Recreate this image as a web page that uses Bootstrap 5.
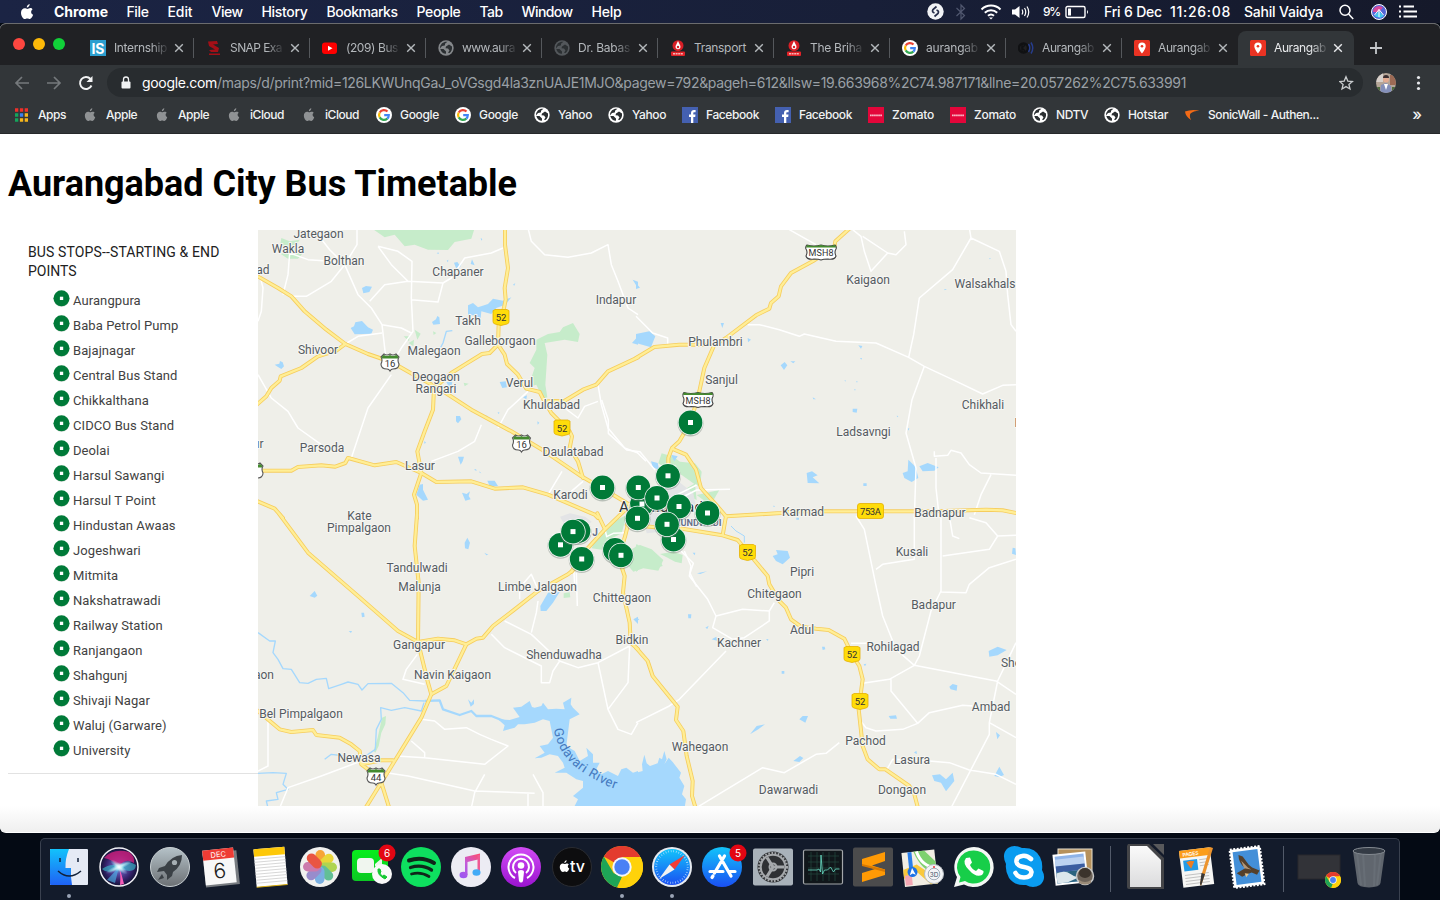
<!DOCTYPE html>
<html lang="en">
<head>
<meta charset="utf-8">
<title>Aurangabad City Bus Timetable</title>
<link href="https://cdn.jsdelivr.net/npm/bootstrap@5.3.0/dist/css/bootstrap.min.css" rel="stylesheet">
<script src="https://cdn.jsdelivr.net/npm/bootstrap@5.3.0/dist/js/bootstrap.bundle.min.js"></script>
<style>
body{width:1440px;height:900px;overflow:hidden;background:#040a14;font-family:Inter,"Liberation Sans",sans-serif}
svg{display:block;flex:none}
.fit{white-space:nowrap;display:block;flex:none}
.menubar{height:23px;background:linear-gradient(90deg,#1b2444,#181f38 60%,#15192a);color:#fff;font-size:14px;font-weight:500;padding-left:20px;line-height:22px}
.window{height:810px;border-radius:6px;overflow:hidden;background:#fff;border-top:1px solid #6b6c6e}
.tabstrip{height:41px;background:#202124;padding:7px 0 0 13px}
.light{width:12px;height:12px;border-radius:50%;margin-right:8px;margin-top:-9px}
.btab{width:116px;height:34px;padding-left:12px;position:relative;color:#b4b8bc;font-size:12px}
.btab .ttl{width:53px;height:18px;line-height:18px;margin-left:8px;white-space:nowrap}
.btab .ttl span{display:inline-block;-webkit-mask-image:linear-gradient(90deg,#000 70%,rgba(0,0,0,.15))}
.btab .ttl span.full{-webkit-mask-image:none}
.btab .cl{margin-left:7px}
.btab:not(.on)::after{content:"";position:absolute;right:0;top:7px;width:1px;height:20px;background:#55585c}
.btab.noline::after{display:none}
.btab.on{background:#323639;border-radius:8px 8px 0 0;color:#e8eaec}
.btab.on .cl{margin-left:6px}
.toolbar{height:36px;background:#323639;padding:0 0 1px 14px}
.omni{height:29px;width:1256px;margin-left:13px;border-radius:15px;background:#282c2f;color:#9aa0a6;font-size:14px;padding-left:14px}
.omni b{color:#fff;font-weight:400}
.bookmarks{height:33px;background:#323639;color:#f1f3f4;font-size:12px;font-weight:500;border-bottom:1px solid #26292b}
.bm{height:28px}
.doc{height:698px;font-family:Roboto,sans-serif;padding-left:8px;background:linear-gradient(#fff 0,#fff 672px,#efefef 698px)}
.doc h1{font-size:36px;font-weight:700;color:#000;line-height:44px;margin:0;padding-top:28px;height:96px}
.side{width:250px;height:544px;border-bottom:1px solid #e2e2e2;padding:13px 20px 0}
.side h2{font-size:14px;line-height:19px;color:#212121;font-weight:400;margin:0 0 7px}
.side h2 span{display:block}
.side li{height:25px;font-size:13px;letter-spacing:.08px;line-height:25px;color:#424242;padding-left:25px;display:flex}
.side li svg{margin:2px 3px 0 0}
.dock{height:62px;width:1360px;margin:5px 0 0 40px;background:#131b2b;border:1px solid #3a414f;border-bottom:0;border-radius:5px 5px 0 0;padding-left:3px}
.app{width:50.25px;height:61px;padding-top:8px;position:relative;display:flex;justify-content:center}
.app svg{overflow:visible}
.app.run::after{content:"";position:absolute;top:55px;left:23px;width:4px;height:4px;border-radius:50%;background:#9aa3b5}
.sep{width:22px;display:flex;justify-content:center}
.sep i{width:1px;height:46px;margin-top:7px;background:#525a69}
.lb{font:12px Roboto,sans-serif;fill:#555b61;text-anchor:middle;paint-order:stroke;stroke:#f6f6f3;stroke-width:2px;stroke-linejoin:round}
.hw{font:9.5px Roboto,sans-serif;fill:#333;text-anchor:middle}
</style>
</head>
<body>
<svg width="0" height="0" style="position:absolute">
<defs>
<symbol id="x" viewBox="0 0 10 10"><path d="M1.200 1.200l7.600 7.600M8.800 1.200L1.200 8.800" stroke="currentColor" stroke-width="1.400"/></symbol>
<symbol id="globe" viewBox="0 0 16 16"><circle cx="8" cy="8" r="7.700" fill="currentColor"/><path d="M9.500 1.800L7.200 3.600 6.800 5.500 4 6 2 8.500 2.200 6 4 3.200 7 1.700zM2.300 9H5.500L8 11.500V13.800Q3.500 13.500 2.300 9zM11 4.500L14 6.500Q14.500 10.500 11.500 13L10 12.800 11.500 10.500 10 8.500 7.500 8.300 8 6.500z" fill="#2b2f32"/></symbol>
<symbol id="goog" viewBox="0 0 16 16"><circle cx="8" cy="8" r="8" fill="#fff"/><g fill="none" stroke-width="2.200"><path d="M11.500 4.500A4.900 4.900 0 0 0 3.700 5.600" stroke="#ea4335"/><path d="M3.700 5.600a4.900 4.900 0 0 0 0 4.800" stroke="#fbbc05"/><path d="M3.700 10.400a4.900 4.900 0 0 0 7.600 1.200" stroke="#34a853"/><path d="M11.300 11.600A4.900 4.900 0 0 0 12.800 8.200H8.200" stroke="#4285f4"/></g></symbol>
<symbol id="apple" viewBox="0 0 14 16"><path d="M9.700 0c.1 1.700-1.200 3.400-2.900 3.500C6.600 1.800 8.200.2 9.700 0zM12.500 5.500c-2 1.200-1.700 4.200.6 5.200-.6 1.800-1.900 4.200-3.300 4.300-1 0-1.300-.6-2.500-.6s-1.600.6-2.500.6C2.900 15 1 11.700 1 8.700 1 5.700 2.900 4.200 4.700 4.200c1.100 0 1.900.7 2.700.7.700 0 1.700-.8 3-.8.900 0 1.700.5 2.100 1.400z" fill="currentColor"/></symbol>
<symbol id="fb" viewBox="0 0 16 16"><rect width="16" height="16" fill="#4460b0"/><path d="M9 16V10H7V7.600h2V6c0-2 1.200-3 3-3h1.600v2.300h-1.300c-.9 0-1 .5-1 1.100v1.200h2.200L13.200 10h-1.900v6z" fill="#fff"/></symbol>
<symbol id="zom" viewBox="0 0 16 16"><rect width="16" height="16" fill="#e3063a"/><path d="M2 8.300h12" stroke="#f8bcc8" stroke-width="1.700" stroke-dasharray="1.700 .35"/></symbol>
<symbol id="pinfav" viewBox="0 0 16 16"><rect width="16" height="16" rx="1.500" fill="#ea3323"/><path d="M8 2.500a3.700 3.700 0 0 0-3.700 3.700C4.300 9 8 13.500 8 13.500S11.700 9 11.700 6.200A3.700 3.700 0 0 0 8 2.500z" fill="#fff"/><circle cx="8" cy="6.200" r="1.300" fill="#ea3323"/></symbol>
<symbol id="redlogo" viewBox="0 0 16 16"><circle cx="8" cy="5.700" r="5.500" fill="#d81f26"/><path d="M8 1l2.300 4.800a2.500 2.500 0 1 1-4.600 0z" fill="#fff"/><circle cx="8" cy="7" r="1.200" fill="#d81f26"/><rect x="1" y="11.500" width="14" height="4.500" rx="1" fill="#e32228"/><path d="M3 13.800h10" stroke="#f6b6b6" stroke-width="1.600" stroke-dasharray="2 .6"/></symbol>
<symbol id="stop" viewBox="0 0 18 18"><circle cx="9" cy="9.600" r="8.300" fill="#d2d8d5"/><circle cx="9" cy="8.800" r="8.500" fill="#007a38"/><rect x="7.300" y="7.100" width="3.500" height="3.500" fill="#fff"/></symbol>
<symbol id="chromeic" viewBox="0 0 42 42"><circle cx="21" cy="21" r="21" fill="#fbc712"/><path d="M21 21L2.800 10.500A21 21 0 0 1 39.200 10.500z" fill="#e33b2e"/><path d="M2.800 10.500L12.500 27 21 31l-5 10.300A21 21 0 0 1 2.800 10.500z" fill="#1ea557"/><path d="M21 31l8.500-5.500L23 42H17z" fill="#fdd008"/><path d="M21 11H39.500A21 21 0 0 1 22 42L30 25z" fill="#ffd20a"/><circle cx="21" cy="21" r="9.700" fill="#f4f6fa"/><circle cx="21" cy="21" r="7.700" fill="#4a80f5"/></symbol>
<linearGradient id="gF" x2="0" y2="1"><stop stop-color="#12c2fb"/><stop offset="1" stop-color="#1f62f5"/></linearGradient>
<linearGradient id="gG" x2="0" y2="1"><stop stop-color="#b5c2c8"/><stop offset="1" stop-color="#6c7074"/></linearGradient>
<linearGradient id="gGr" x2="0" y2="1"><stop stop-color="#07ee1c"/><stop offset="1" stop-color="#0cc824"/></linearGradient>
<linearGradient id="gP" x2="0" y2="1"><stop stop-color="#d24bf5"/><stop offset="1" stop-color="#9a14cf"/></linearGradient>
<linearGradient id="gB" x2="0" y2="1"><stop stop-color="#12c4fb"/><stop offset="1" stop-color="#1a4ff2"/></linearGradient>
<linearGradient id="gN" gradientUnits="userSpaceOnUse" x1="10" y1="30" x2="28" y2="8"><stop stop-color="#9a56f2"/><stop offset=".5" stop-color="#c45bd8"/><stop offset="1" stop-color="#fb4d74"/></linearGradient>
<radialGradient id="gS"><stop stop-color="#6fd0ea"/><stop offset=".35" stop-color="#5a4fa8"/><stop offset=".7" stop-color="#35226a"/><stop offset="1" stop-color="#121335"/></radialGradient>
<radialGradient id="gW"><stop stop-color="#fff"/><stop offset="1" stop-color="#9fe8f5" stop-opacity="0"/></radialGradient>
<linearGradient id="gL" x2="0" y2="1"><stop stop-color="#fafafa"/><stop offset="1" stop-color="#dcdcdd"/></linearGradient>
</defs>
</svg>

<div class="menubar d-flex align-items-center">
<svg width="14" height="16" color="#fff"><use href="#apple"/></svg>
<span class="fit" data-w="54" style="margin-left:20px;font-weight:700">Chrome</span>
<div class="d-flex" style="gap:19px;margin-left:18.500px">
<span class="fit" data-w="22">File</span><span class="fit" data-w="25">Edit</span><span class="fit" data-w="31">View</span><span class="fit" data-w="46">History</span><span class="fit" data-w="71">Bookmarks</span><span class="fit" data-w="44">People</span><span class="fit" data-w="23">Tab</span><span class="fit" data-w="51">Window</span><span class="fit" data-w="30">Help</span></div>
<div class="d-flex align-items-center ms-auto" style="padding-right:23px">
<svg style="margin-right:-4px" width="17" height="17" viewBox="0 0 17 17"><circle cx="8.500" cy="8.500" r="8.200" fill="#f1f3f6"/><path d="M9.500 3.500L6 6.500Q4.500 9 7.500 10M7.500 13.500L11 10.500Q12.500 8 9.500 7" fill="none" stroke="#252c48" stroke-width="1.700"/></svg>
<svg style="margin-left:14px" width="14" height="18" viewBox="0 0 14 18"><path d="M2.500 5l8 7.500L7 16V2l3.500 3.500-8 7.500" fill="none" stroke="#515870" stroke-width="1.200"/></svg>
<svg style="margin-left:12px" width="22" height="16" viewBox="0 0 22 16" fill="none" stroke="#fff" stroke-width="2"><path d="M1.500 5.500a13.500 13.500 0 0 1 19 0M4.800 8.700a9 9 0 0 1 12.400 0M8 11.800a4.500 4.500 0 0 1 6 0"/><path d="M11 15.500l2-2h-4z" fill="#fff" stroke="none"/></svg>
<svg style="margin-left:9px" width="19" height="16" viewBox="0 0 19 16"><path d="M1 5.500h3L8.500 2v12L4 10.500H1z" fill="#fff"/><path d="M11 5.500q1.500 2.500 0 5M13.500 4q2.500 4 0 8M16 2.500q3.500 5.500 0 11" stroke="#fff" fill="none" stroke-width="1.200"/></svg>
<span class="fit" data-w="17" style="margin-left:13px;font-size:12px">9%</span>
<svg style="margin-left:5px" width="24" height="14" viewBox="0 0 24 14"><rect x="1" y="1.500" width="19" height="11" rx="1.500" fill="none" stroke="#fff" stroke-width="1.400"/><rect x="3" y="3.500" width="3" height="7" fill="#fff"/><path d="M22 5q2 2 0 4z" fill="#fff"/></svg>
<span class="fit" data-w="58" style="margin-left:15px">Fri 6 Dec</span><span class="fit" data-w="61" style="margin-left:8px">11:26:08</span><span class="fit" data-w="79" style="margin-left:13px">Sahil Vaidya</span>
<svg style="margin-left:16px" width="15" height="16" viewBox="0 0 15 16" fill="none" stroke="#fff" stroke-width="1.500"><circle cx="6" cy="6.200" r="5"/><path d="M9.600 10l4.600 5"/></svg>
<svg style="margin-left:17px" width="16" height="16" viewBox="0 0 16 16"><circle cx="8" cy="8" r="7.500" fill="#5467d8" stroke="#fff"/><path d="M2 8a6 6 0 0 1 10-4.500L8 8z" fill="#d84a9d"/><path d="M3 12l5-5 5 5-4 2z" fill="#42c8ee"/><path d="M3.500 11L8 5.500 12.500 11M8 5.500V13" stroke="#fff" fill="none"/></svg>
<svg style="margin-left:12px" width="18" height="13" viewBox="0 0 18 13"><path d="M0 1.500h2M4.500 1.500H15M0 6.500h2M4.500 6.500H18M0 11.500h2M4.500 11.500H18" stroke="#fff" stroke-width="2"/></svg>
</div>
</div>

<div class="window">
<div class="tabstrip d-flex align-items-center">
<i class="light" style="background:#fe4740"></i><i class="light" style="background:#fdb908"></i><i class="light" style="background:#11d139;margin-right:13px"></i>
<div class="btab d-flex align-items-center"><svg width="16" height="16" viewBox="0 0 16 16"><rect width="16" height="16" fill="#2c9fd0"/><text x="8" y="13.500" font-size="14" font-weight="700" fill="#fff" text-anchor="middle" textLength="13">IS</text></svg><div class="ttl"><span data-w="53">Internship</span></div><svg class="cl" width="10" height="10"><use href="#x"/></svg></div>
<div class="btab d-flex align-items-center"><svg width="16" height="16" viewBox="0 0 16 16"><path d="M2 1.500l9-.5 1 3-5 .5 6 3.500-1 4H5l-2-2 6-.5L3 6zM3 13.500h11v1.500H3z" fill="#a30f17"/></svg><div class="ttl"><span data-w="52">SNAP Exa</span></div><svg class="cl" width="10" height="10"><use href="#x"/></svg></div>
<div class="btab d-flex align-items-center"><svg width="16" height="16" viewBox="0 0 16 16"><rect x="0" y="2.500" width="15" height="11.500" rx="3" fill="#fe0000"/><path d="M6 5.700v5l4.500-2.500z" fill="#fff"/></svg><div class="ttl"><span data-w="52">(209) Bus</span></div><svg class="cl" width="10" height="10"><use href="#x"/></svg></div>
<div class="btab d-flex align-items-center"><svg width="16" height="16" color="#85888b"><use href="#globe"/></svg><div class="ttl"><span data-w="53">www.aura</span></div><svg class="cl" width="10" height="10"><use href="#x"/></svg></div>
<div class="btab d-flex align-items-center"><svg width="16" height="16" color="#53575b"><use href="#globe"/></svg><div class="ttl"><span data-w="52">Dr. Babas</span></div><svg class="cl" width="10" height="10"><use href="#x"/></svg></div>
<div class="btab d-flex align-items-center"><svg width="16" height="16"><use href="#redlogo"/></svg><div class="ttl"><span class="full" data-w="52">Transport</span></div><svg class="cl" width="10" height="10"><use href="#x"/></svg></div>
<div class="btab d-flex align-items-center"><svg width="16" height="16"><use href="#redlogo"/></svg><div class="ttl"><span data-w="52">The Briha</span></div><svg class="cl" width="10" height="10"><use href="#x"/></svg></div>
<div class="btab d-flex align-items-center"><svg width="16" height="16"><use href="#goog"/></svg><div class="ttl"><span data-w="52">aurangab</span></div><svg class="cl" width="10" height="10"><use href="#x"/></svg></div>
<div class="btab d-flex align-items-center"><svg width="16" height="16" viewBox="0 0 16 16" fill="none"><circle cx="5.500" cy="8" r="4.500" stroke="#101113" stroke-width="2.500"/><path d="M4 4v8M7 5L4 8l3 3" stroke="#101113" stroke-width="1.500"/><path d="M10.500 4q2.500 4 0 8M13 2.500q3.500 5.500 0 11" stroke="#263d8d" stroke-width="1.500"/></svg><div class="ttl"><span data-w="52">Aurangab</span></div><svg class="cl" width="10" height="10"><use href="#x"/></svg></div>
<div class="btab noline d-flex align-items-center"><svg width="16" height="16"><use href="#pinfav"/></svg><div class="ttl"><span data-w="52">Aurangab</span></div><svg class="cl" width="10" height="10"><use href="#x"/></svg></div>
<div class="btab on d-flex align-items-center"><svg width="16" height="16"><use href="#pinfav"/></svg><div class="ttl"><span data-w="52">Aurangab</span></div><svg class="cl" width="10" height="10"><use href="#x"/></svg></div>
<svg style="margin-left:15px" width="14" height="14"><path d="M7 1v12M1 7h12" stroke="#c6c9cc" stroke-width="1.800"/></svg>
</div>

<div class="toolbar d-flex align-items-center">
<svg width="16" height="14" viewBox="0 0 16 14" fill="none" stroke="#75797c" stroke-width="1.700"><path d="M15 7H2M8 1L2 7l6 6"/></svg>
<svg style="margin-left:16px" width="16" height="14" viewBox="0 0 16 14" fill="none" stroke="#75797c" stroke-width="1.700"><path d="M1 7h13M8 1l6 6-6 6"/></svg>
<svg style="margin-left:16px" width="16" height="16" viewBox="0 0 16 16"><path d="M13.500 10.500A6 6 0 1 1 12.500 4" fill="none" stroke="#f3f4f5" stroke-width="1.900"/><path d="M14.500 1v6h-6z" fill="#f3f4f5"/></svg>
<div class="omni d-flex align-items-center">
<svg width="10" height="14" viewBox="0 0 10 14"><rect x=".5" y="5.500" width="9" height="7" rx="1" fill="#f1f3f4"/><path d="M2.500 6V3.500a2.500 2.500 0 0 1 5 0V6" fill="none" stroke="#f1f3f4" stroke-width="1.300"/></svg>
<span class="fit" data-w="1044" style="margin-left:11px"><b>google.com</b>/maps/d/print?mid=126LKWUnqGaJ_oVGsgd4la3znUAJE1MJO&amp;pagew=792&amp;pageh=612&amp;llsw=19.663968%2C74.987171&amp;llne=20.057262%2C75.633991</span>
<svg class="ms-auto me-2" width="16" height="16" viewBox="0 0 16 16"><path d="M7 1.800l1.800 4.300 4.600.4-3.500 3 1.100 4.500L7 11.600 3 14l1.100-4.500-3.500-3 4.600-.4z" fill="none" stroke="#c9ccce" stroke-width="1.300"/></svg>
</div>
<svg style="margin-left:13px" width="20" height="20" viewBox="0 0 20 20"><clipPath id="av"><circle cx="10" cy="10" r="10"/></clipPath><g clip-path="url(#av)"><rect width="20" height="20" fill="#b5a597"/><path d="M0 0h7v9H0z" fill="#d7d0cb"/><path d="M14 2h6v10h-6z" fill="#9c6a55"/><path d="M4 20l1-8 5-2 5 3 1 7z" fill="#8490ba"/><path d="M8 11l2 6 2-6z" fill="#fff"/><circle cx="10" cy="6.500" r="3" fill="#e4ac92"/><path d="M7 5a3 3 0 0 1 6 0z" fill="#3b2e30"/><path d="M0 14h4v6H0zM16 14h4v6h-4z" fill="#4d6a3c"/></g></svg>
<svg style="margin-left:20px" width="5" height="16" fill="#e8eaed"><circle cx="2.500" cy="2.500" r="1.600"/><circle cx="2.500" cy="8" r="1.600"/><circle cx="2.500" cy="13.500" r="1.600"/></svg>
</div>

<div class="bookmarks">
<div class="d-flex align-items-center bm" style="padding-left:15px">
<svg width="13" height="14" viewBox="0 0 13 14"><path d="M0 2h3.300M4.900 2h3.300M9.700 2H13" stroke="#f0302a" stroke-width="3.300"/><path d="M0 7h3.300" stroke="#14a55c" stroke-width="3.300"/><path d="M4.900 7h3.300" stroke="#3b80f0" stroke-width="3.300"/><path d="M9.700 7H13M4.900 12h3.300M9.700 12H13" stroke="#f8b71b" stroke-width="3.300"/><path d="M0 12h3.300" stroke="#14a55c" stroke-width="3.300"/></svg>
<span class="fit" data-w="28" style="margin:0 18px 0 10px">Apps</span>
<svg width="12" height="14" color="#8f9294"><use href="#apple"/></svg><span class="fit" data-w="31" style="margin:0 19px 0 10px">Apple</span>
<svg width="12" height="14" color="#8f9294"><use href="#apple"/></svg><span class="fit" data-w="31" style="margin:0 19px 0 10px">Apple</span>
<svg width="12" height="14" color="#8f9294"><use href="#apple"/></svg><span class="fit" data-w="34" style="margin:0 19px 0 10px">iCloud</span>
<svg width="12" height="14" color="#8f9294"><use href="#apple"/></svg><span class="fit" data-w="34" style="margin:0 17px 0 10px">iCloud</span>
<svg width="16" height="16"><use href="#goog"/></svg><span class="fit" data-w="39" style="margin:0 16px 0 8px">Google</span>
<svg width="16" height="16"><use href="#goog"/></svg><span class="fit" data-w="39" style="margin:0 16px 0 8px">Google</span>
<svg width="16" height="16" color="#fff"><use href="#globe"/></svg><span class="fit" data-w="34" style="margin:0 16px 0 8px">Yahoo</span>
<svg width="16" height="16" color="#fff"><use href="#globe"/></svg><span class="fit" data-w="34" style="margin:0 16px 0 8px">Yahoo</span>
<svg width="16" height="16"><use href="#fb"/></svg><span class="fit" data-w="53" style="margin:0 16px 0 8px">Facebook</span>
<svg width="16" height="16"><use href="#fb"/></svg><span class="fit" data-w="53" style="margin:0 16px 0 8px">Facebook</span>
<svg width="16" height="16"><use href="#zom"/></svg><span class="fit" data-w="42" style="margin:0 16px 0 8px">Zomato</span>
<svg width="16" height="16"><use href="#zom"/></svg><span class="fit" data-w="42" style="margin:0 16px 0 8px">Zomato</span>
<svg width="16" height="16" color="#fff"><use href="#globe"/></svg><span class="fit" data-w="32" style="margin:0 16px 0 8px">NDTV</span>
<svg width="16" height="16" color="#fff"><use href="#globe"/></svg><span class="fit" data-w="40" style="margin:0 16px 0 8px">Hotstar</span>
<svg width="16" height="16" viewBox="0 0 16 16"><path d="M1 4.500Q7 2 15.500 3.500 9 4 6.500 6.500 5 9 7 13 1.500 9.500 1 4.500z" fill="#f26a16"/></svg><span class="fit" data-w="111" style="margin:0 0 0 8px">SonicWall - Authen...</span>
<span class="ms-auto" style="padding-right:18px;font-size:16px;margin-top:-3px">»</span>
</div></div>

<div class="doc">
<h1><span class="fit" style="display:inline-block" data-w="509">Aurangabad City Bus Timetable</span></h1>
<div class="d-flex">
<div class="side">
<h2><span class="fit" style="display:inline-block" data-w="191.500">BUS STOPS--STARTING &amp; END</span><span>POINTS</span></h2>
<ul class="list-unstyled m-0">
<li><svg width="17" height="17"><use href="#stop"/></svg>Aurangpura</li>
<li><svg width="17" height="17"><use href="#stop"/></svg>Baba Petrol Pump</li>
<li><svg width="17" height="17"><use href="#stop"/></svg>Bajajnagar</li>
<li><svg width="17" height="17"><use href="#stop"/></svg>Central Bus Stand</li>
<li><svg width="17" height="17"><use href="#stop"/></svg>Chikkalthana</li>
<li><svg width="17" height="17"><use href="#stop"/></svg>CIDCO Bus Stand</li>
<li><svg width="17" height="17"><use href="#stop"/></svg>Deolai</li>
<li><svg width="17" height="17"><use href="#stop"/></svg>Harsul Sawangi</li>
<li><svg width="17" height="17"><use href="#stop"/></svg>Harsul T Point</li>
<li><svg width="17" height="17"><use href="#stop"/></svg>Hindustan Awaas</li>
<li><svg width="17" height="17"><use href="#stop"/></svg>Jogeshwari</li>
<li><svg width="17" height="17"><use href="#stop"/></svg>Mitmita</li>
<li><svg width="17" height="17"><use href="#stop"/></svg>Nakshatrawadi</li>
<li><svg width="17" height="17"><use href="#stop"/></svg>Railway Station</li>
<li><svg width="17" height="17"><use href="#stop"/></svg>Ranjangaon</li>
<li><svg width="17" height="17"><use href="#stop"/></svg>Shahgunj</li>
<li><svg width="17" height="17"><use href="#stop"/></svg>Shivaji Nagar</li>
<li><svg width="17" height="17"><use href="#stop"/></svg>Waluj (Garware)</li>
<li><svg width="17" height="17"><use href="#stop"/></svg>University</li>
</ul>
</div>
<svg width="758" height="576" viewBox="258 230 758 576">
<defs>
<!-- four map sheets plus the city sheet, each drawn at 3x -->
<g id="roads" fill="none" stroke-linejoin="round" stroke-linecap="round">
<g transform="translate(258 228) scale(.33333)">
<path d="M-6 142L60 180 100 205 140 250 205 305 262 348 330 378 400 402 475 445 540 480 640 545 760 610 860 670 970 745 1040 785 1115 830"/>
<path d="M-6 532L25 505 40 480 65 458 68 445 130 420 180 385 235 368 262 348"/>
<path d="M741 0V50L750 120 740 180 743 215 738 240 722 290 720 350 740 380 747 408 780 440 805 482 845 492 858 518 880 555 935 610 942 625 935 660 960 700 975 750"/>
<path d="M720 350L695 375 672 378 620 410 580 435 535 475 528 480 525 545 500 610 478 670 490 735"/>
<path d="M0 728H100L120 717 190 712 232 716 262 705 270 690 350 712 415 702 490 735 535 762 640 760 710 782 795 778 870 800 1010 860 1020 870"/>
<path d="M490 735L468 800 477 830V870M-6 818L50 842 75 870M870 520L920 518 975 485 1015 470 1050 430 1140 388"/>
</g>
<g transform="translate(636 228) scale(.33333)">
<path d="M640 2L598 40 595 58 530 100 465 135 435 175 428 205 405 225 400 242 360 262 270 330 235 352"/>
<path d="M0 390L55 357 130 350H235L205 420 190 490 165 580 130 640 108 660 97 690V730M108 662L150 680 180 725 195 780 240 830 270 865 435 855 480 850H900L1050 845 1100 847 1146 856"/>
</g>
<g transform="translate(636 516) scale(.33333)">
<path d="M125 36L260 58 305 72 395 180 400 205 430 255 450 275 465 310 495 332 540 338 578 342 625 368 648 415 670 450 680 490 668 580 680 690 695 730 730 760H748L820 810 835 835 847 880M260 58L270 0"/>
<path d="M0 395L35 435 50 480 125 572 120 612 142 645 152 720 170 795 168 840 180 880"/>
</g>
<g transform="translate(258 516) scale(.33333)">
<path d="M65 -4L150 110 300 240 420 345 480 378M477 -4L470 90 482 200 480 378 510 500 520 535M480 378L540 368 590 373 625 385 655 368 675 365 705 330 770 280 840 225 930 175 950 158"/>
<path d="M625 385L565 510 520 535 490 605 410 735 320 880M-6 580L65 640 100 648 165 642 175 657 245 665 280 685 305 705 310 745 370 733H405M310 745L330 760 370 800 395 880M1090 150L1100 180 1095 230 1115 320 1118 380 1140 400"/>
</g>
<g transform="translate(530 400) scale(.33333)">
<path d="M202 340L225 388 300 316M225 388L150 470 125 515M290 375L360 380 450 390M295 370L285 410 272 450 280 500"/>
</g>
</g>
<g id="us"><path d="M-9-5Q-7-7-6-8-3-6 0-8 3-6 6-8 7-7 9-5 7-2 9 2 9 7 3 7 1 7 0 9-1 7-3 7-9 7-9 2-7-2-9-5z" fill="#fff" stroke="#555" stroke-width="1.100"/><path d="M-8.300-5Q-7-7-6-7-3-5 0-7 3-5 6-7 7-7 8.300-5L8-3.500H-8z" fill="#448a2f"/></g>
<g id="msh"><path d="M-14-7Q-7-5 0-7 7-5 14-7 16-5 15-3 13 0 15 4 14 8 7 7 2 7 0 8-2 7-7 7-14 8-15 4-13 0-15-3-16-5-14-7z" fill="#fff" stroke="#444" stroke-width="1.100"/><path d="M-14-7Q-7-5 0-7 7-5 14-7L15-4.500H-15z" fill="#448a2f"/><text class="hw" y="4" style="font-size:9px" textLength="25">MSH8</text></g>
<g id="nh"><path d="M-6-8H6Q7-7 8-7V4Q8 6 6 6.500L0 8-6 6.500Q-8 6-8 4V-7Q-7-7-6-8z" fill="#ffdc0a" stroke="#e5b000" stroke-width=".8"/><text class="hw" y="3.500">52</text></g>
<g id="pin"><circle cy="1" r="13" fill="#6c7b70" opacity=".4"/><circle r="12.600" fill="#fff"/><circle r="11.900" fill="#007a38"/><rect x="-2.500" y="-2.500" width="5" height="5" fill="#fff"/></g>
</defs>
<rect x="258" y="230" width="758" height="576" fill="#efefe9"/>
<!-- parks -->
<g fill="#c6ecca">
<path transform="translate(258 228) scale(.33333)" d="M340 0L380 28 410 20 440 55 470 50 510 65 570 66 590 42 640 32 650 0zM70 30L95 40 125 35 110 60 135 75 120 92 90 92 68 78 90 70 65 60zM835 335L870 318 905 312 915 298 945 285 965 318 960 342 920 335 860 345 868 380 862 470 868 508 855 512 835 470 810 478 830 420 815 405 835 365zM470 305l18 12-10 18zM437 325l18 0-2 15zM452 345l16-10-2 20zM525 310l10 5-8 6zM617 464l15 3-12 8z"/>
<path transform="translate(530 400) scale(.33333)" d="M395 160L430 170 450 185 495 190 515 215 510 260 490 250 455 225 420 215 385 190zM470 265L495 250 500 300 480 290zM500 285L568 270 545 310 520 300zM230 375L290 345 275 400 235 420 220 450 185 445 200 410zM300 450L330 435 365 448 400 480 385 512 340 505 310 515 280 480zM390 462L430 455 458 465 455 490 435 485 410 472z"/>
<path transform="translate(258 516) scale(.33333)" d="M917 232l18-3 2 15-20 2zM372 605l12-5-2 25-12 25-8 40-10 20-5-5 12-40zM1140 85L1115 110 1125 155 1140 165z"/>
<path transform="translate(636 516) scale(.33333)" d="M0 85L25 95 65 120 80 150 45 160 25 145 0 168z"/>
</g>
<path transform="translate(530 400) scale(.33333)" d="M90 350L120 340 165 350 185 365 160 385 110 385zM400 250L440 240 490 280 500 330 460 350 440 390 350 400 340 350z" fill="#e3e4e6"/>
<!-- lakes and streams -->
<g fill="#a5d8fd">
<path transform="translate(258 228) scale(.33333)" d="M278 300L288 295 292 283 312 279 330 298 345 305 340 317 290 319zM312 180l12-6 18 2-8 16-18 4zM630 232L645 225 660 238 690 228 705 212 735 218 760 208 742 230 715 240 700 258 670 250 668 270 655 280 648 262 630 262zM522 282l12-8 4-10 6 4 2 20-20 2zM588 104l10-2 6 8 8-6-6 14-12 2zM638 108l4-14 8 18zM50 410l14-3 2-8 8 4 4 12-8 8-10-6zM594 564l12 0 4 10-10 12-6-6zM600 686l18 0-4 14-6 10zM475 800L485 770 495 768 495 785 510 815 495 818zM612 794l14 4 10-8-4 14 6 10-16 4zM688 758l22 0 10 16-24 2zM725 462l18-2 4 18-14 2zM795 508l12-6-2 12zM1124 155l16 6v20zM565 462l18 0-5 24zM1122 345l18-20v25zM536 76l5-3 2 5zM566 98l5-3-1 8zM668 30l5 3-3 5zM765 170l7-5-3 8zM681 562l8 2-5 5zM639 541l6 2-4 4zM719 552l6 2-4 4zM838 580l6 4-5 6zM498 640l6 3-4 5zM648 725l6-2 2 6zM664 730l6 6-5-2z"/>
<path transform="translate(636 228) scale(.33333)" d="M0 318L40 310 58 325 45 358 0 345zM434 412l12-10 8 10-10 14zM463 400l15 0-6 6zM512 735L528 730 545 742 530 748 550 766 515 765zM800 735l15-5 2-35 20 20 5 15 5 20-20 12-22-12zM850 715L875 705 908 718 895 728 860 730zM667 352l12 2-4 8zM650 542l14 0-2 12-12-2zM682 766h10v8h-10zM0 165l12 14-12 4zM254 285l10 0-5 15zM335 330l10 5-9 8zM45 700l20 5 5 22-20-10zM105 680l20 5-10 15zM530 508l10 6-8 0zM672 390l6 0-2 5zM625 457l4 0 0 4zM660 460l5 0-2 4zM654 484l5 0-2 4zM686 489l6 2zM782 563l5 1-3 4zM815 602l5-2-2 8zM1060 90l5 1-4 3zM925 183l8 0-7 4zM411 833l6 1-3 4zM262 475l10 4-6 0z"/>
<path transform="translate(258 516) scale(.33333)" d="M620 80l8-15 8 15-5 20-10-3zM155 240l15-15 8 14-8 6zM310 290l8 0 2 12-8 2zM272 345h10l-3 6zM679 110l12 6-6 2zM847 270L870 230 905 228 885 260 865 285 848 285zM720 610L755 612 785 603 765 575 790 572 815 555 822 573 830 575 850 570 855 560 870 580 895 578 920 580 915 560 940 545 938 565 945 575 965 595 935 610 930 650 925 690 950 705 965 735 990 720 985 695 1005 715 1005 740 1025 740 1015 760 1030 775 1050 765 1080 780 1090 760 1105 755 1125 770 1140 765V880H945L960 850 945 840 975 815 975 795 955 790 925 770 890 770 920 755 915 740 900 720 875 715 850 725 830 727 860 710 845 690 870 685 885 665 880 640 875 615 855 610 830 620 800 625 780 625 770 635 735 645 740 628zM630 550l10 10 8-10 0 14-10 8zM1126 310l14-8v22z"/>
<path transform="translate(636 516) scale(.33333)" d="M0 770L20 765 18 745 25 716 32 742 42 750 65 742 70 725 78 730 85 705 92 730 85 745 98 725 110 738 135 770 130 785 145 810 138 835 150 850 145 880H0zM410 120L425 115 420 102 455 105 462 125 440 145 420 135zM490 610l10-10 16 0-8 20zM342 655l20-25 25-5-20 15zM888 778L912 775 930 790 950 770 955 795 930 826 915 800 895 795zM1058 405L1085 392 1112 402 1085 418 1060 422zM940 512l10-8 14 4-2 16-18-4zM758 600l22-2 3 10-20 0zM472 735l20-15 10 6-12 12zM1080 648l12 10-8 12zM1075 780l15-28 14 25-14 6zM156 295l10 0-1 12-8 0zM227 370l14-8 2 12zM558 392h8l2 8-8 2zM437 465h8v8h-8zM183 172l30-6-20 8zM170 110l8 0-2 8zM1130 95l8 2 2 20-12-4zM0 305l10 5-10 8zM834 710l7-6 2 10zM683 445l8-2-4 8zM208 335l10-6-4 10zM390 370l7-1-1 6zM481 5h8v6h-8z"/>
</g>
<g fill="none" stroke="#a5d8fd" stroke-linejoin="round">
<path transform="translate(258 516) scale(.33333)" stroke-width="4" d="M0 350L35 375 52 375 45 410 60 430 75 458 100 460 125 500 150 502 175 490 205 487 212 518 250 505 270 498 300 505 312 522 330 503 400 502 435 530 455 553 500 555M498 560L490 585 440 575 400 583 368 575 370 610 355 640 352 700 330 715 260 720 220 715 200 730M0 772L45 770 85 772 75 805 90 820 55 830 60 850 25 855 30 876"/>
<path transform="translate(258 516) scale(.33333)" stroke-width="7" d="M500 555L545 553 555 580 605 597 640 585 655 600 700 600 750 620"/>
<path transform="translate(258 228) scale(.33333)" stroke-width="4" d="M583 308L565 310 555 345 547 360"/>
<path transform="translate(636 516) scale(.33333)" stroke-width="3" d="M285 30L300 45 325 60 325 80"/>
</g>
<!-- minor roads -->
<g fill="none" stroke="#fff" stroke-linejoin="round">
<path transform="translate(258 228) scale(.33333)" stroke-width="4.500" d="M297 0V50L260 110 220 160 145 205 100 205M180 20L215 65 260 110 300 200 340 240 372 290 383 385M95 75L90 140 75 200M95 75L150 95 220 100 260 110M360 55L420 70 462 100 460 210 465 310 430 360 415 385M360 55L400 110 450 160 555 165 580 150 620 90 700 75 735 60M450 160L380 170 335 220M460 215L540 222 555 165M262 348L300 325 372 315M372 290L430 300 460 315M400 440L330 540 310 600 280 690M0 440L40 510 90 550 120 600 190 650M520 700L600 670 650 640 670 590M720 600L750 545 810 490M912 730L870 800M975 760L940 790M810 0L820 40 860 80 930 88 1000 75 1050 50 1060 110 1080 160 1110 240 1140 260M1020 470L1030 530 1050 600 1075 630 1100 660 1140 675M920 540L960 570 980 535 1020 520M0 120L15 180 10 250 0 280"/>
<path transform="translate(636 228) scale(.33333)" stroke-width="4.500" d="M0 265L50 315 95 330V350M335 290L370 290 430 305 490 325 505 318 600 340 720 345 818 388 865 415 950 455 1040 498 1100 472 1140 470M1000 0L1005 30 1090 70 1110 130 1115 200 1125 290 1140 310M1005 30L950 125 850 210 833 320 818 388M865 415L828 515 810 615 840 720 835 870M895 670V685L935 682 945 667 975 675 1000 710 1035 735 1140 742M900 690L900 780 910 870M1065 740L1035 800 1015 860M460 5L540 50M650 5L675 25 685 70 705 130 755 75 680 25M755 75L780 80 810 50 805 10M0 670L30 700"/>
<path transform="translate(530 400) scale(.33333)" stroke-width="4.500" d="M215 0L235 60 235 100 290 150 330 155 375 210M430 290L500 255M440 300L500 270 600 268M225 388L230 410 250 400 290 398M450 450L490 490 480 520 500 560M130 485L135 570"/>
<path transform="translate(258 516) scale(.33333)" stroke-width="4.500" d="M478 415L445 460 435 490 500 505M700 355L740 395 850 450 850 500 875 500 885 465 905 435 820 355 740 315M785 250V215L820 175 840 220M955 170L958 270M840 255L835 290 820 350M905 435L960 455 1020 440 1115 390M1020 440L1035 510 1050 580 1080 640 1120 655 1140 620M1050 580L1110 500 1115 390M490 610L530 615 560 640 625 635 665 655 700 670 750 690 680 745 500 725 415 720M460 675L500 710 500 725M30 600V750L0 765M310 735L190 780 90 815 65 876M385 770L450 780 560 805 650 825 830 832M680 775L650 830 640 876M825 775L855 830V876M810 830V876"/>
<path transform="translate(636 516) scale(.33333)" stroke-width="4.500" d="M145 105L165 150 160 180 215 250 240 300 320 280 400 285 415 260M240 300L230 335 290 370 325 365 400 315V285M270 405L130 550 100 570 0 620M660 0L685 40 718 200 740 300 780 400 835 448 1080 495 1140 535M645 382H700M885 285L850 420 835 448 760 490 680 502M720 160L740 145 835 130V0M915 0V225L885 285M920 120L1060 100 1085 60 1140 58M915 228L990 230 1000 205 1060 155 1140 130M1140 380L1085 495 1060 620V655L945 876M1060 620L1140 665M765 490L765 525 845 622 800 640 720 645 690 635 670 610M845 622L880 590 980 568 1010 570M180 876L380 755 445 770 540 715 570 712 610 680M750 765L770 730 880 735 940 740 1000 762 1080 775 1140 805M940 0L950 60 970 68M1000 5L1050 20 1085 60"/>
</g>
<use href="#roads" stroke="#f6cd5e" stroke-width="12"/>
<use href="#roads" stroke="#ffee96" stroke-width="7"/>
<use href="#us" x="390" y="362"/><text class="hw" x="390" y="366.500">16</text><use href="#us" x="521.500" y="443"/><text class="hw" x="521.500" y="447.500">16</text><use href="#us" x="376" y="776"/><text class="hw" x="376" y="780.500">44</text><use href="#us" x="254" y="471"/>
<use href="#msh" x="821" y="252"/><use href="#msh" x="698" y="399.500"/>
<use href="#nh" x="501" y="317.500"/><use href="#nh" x="562" y="428"/><use href="#nh" x="747.500" y="552.500"/><use href="#nh" x="852" y="654.500"/><use href="#nh" x="860" y="701.500"/>
<rect x="857.500" y="503.500" width="26" height="15" rx="2.500" fill="#ffdc0a" stroke="#e5b000" stroke-width=".8"/><text class="hw" x="870.500" y="514.500" textLength="21">753A</text>
<g class="lb">
<text x="318.500" y="238">Jategaon</text><text x="288" y="253">Wakla</text><text x="344" y="264.500">Bolthan</text><text x="263" y="274">ad</text><text x="458" y="276">Chapaner</text><text x="468" y="325">Takh</text><text x="500" y="345">Galleborgaon</text><text x="434" y="355">Malegaon</text><text x="318" y="354">Shivoor</text><text x="436" y="381">Deogaon</text><text x="436" y="393">Rangari</text><text x="519.500" y="387">Verul</text><text x="551.500" y="409">Khuldabad</text><text x="616" y="304">Indapur</text><text x="322" y="452">Parsoda</text><text x="420" y="470">Lasur</text><text x="573" y="456">Daulatabad</text><text x="570.500" y="499">Karodi</text><text x="359.500" y="520">Kate</text><text x="359" y="532">Pimpalgaon</text><text x="260" y="448">ır</text>
<text x="715.500" y="346">Phulambri</text><text x="721.500" y="384">Sanjul</text><text x="868" y="283.500">Kaigaon</text><text x="985" y="288">Walsakhals</text><text x="983" y="409">Chikhali</text><text x="863.500" y="436">Ladsavngi</text><text x="803" y="516">Karmad</text><text x="940" y="516.500">Badnapur</text><text x="1018" y="427">E</text>
<text x="912" y="556">Kusali</text><text x="802" y="576">Pipri</text><text x="774.500" y="598">Chitegaon</text><text x="933.500" y="609">Badapur</text><text x="802" y="634">Adul</text><text x="739" y="647">Kachner</text><text x="893" y="651">Rohilagad</text><text x="1011" y="667">She</text><text x="991" y="710.500">Ambad</text><text x="865.500" y="745">Pachod</text><text x="912" y="764">Lasura</text><text x="902" y="794">Dongaon</text><text x="788.500" y="794">Dawarwadi</text><text x="700" y="751">Wahegaon</text>
<text x="632" y="644">Bidkin</text><text x="564" y="659">Shenduwadha</text><text x="622" y="602">Chittegaon</text><text x="537.500" y="591">Limbe Jalgaon</text><text x="417" y="572">Tandulwadi</text><text x="419.500" y="591">Malunja</text><text x="419" y="649">Gangapur</text><text x="452.500" y="679">Navin Kaigaon</text><text x="264" y="679">aon</text><text x="301" y="718">Bel Pimpalgaon</text><text x="359" y="762">Newasa</text>
<text x="661" y="512" style="font-size:15px;fill:#2f3438" textLength="84">Aurangabad</text><text x="697" y="525.500" style="font-size:9.500px;font-weight:700;fill:#68708a" textLength="49">MUNDWADI</text><text x="595" y="535.500" style="font-size:10px;font-weight:700;fill:#68708a">J</text>
</g>
<path id="river" d="M554 729Q558 757 584 773T621 790" fill="none"/><text style="font:13px Roboto,sans-serif;fill:#4478bd"><textPath href="#river" textLength="90">Godavari River</textPath></text>
<use href="#pin" x="690.500" y="422.500"/><use href="#pin" x="668" y="475.800"/><use href="#pin" x="602.500" y="487.500"/><use href="#pin" x="642" y="504"/><use href="#pin" x="638.300" y="487.500"/><use href="#pin" x="657" y="498"/><use href="#pin" x="679" y="506.500"/><use href="#pin" x="707.500" y="513"/><use href="#pin" x="637.500" y="518.300"/><use href="#pin" x="673.500" y="539.500"/><use href="#pin" x="667" y="524.300"/><use href="#pin" x="560.500" y="544.800"/><use href="#pin" x="578.500" y="531"/><use href="#pin" x="573" y="531.600"/><use href="#pin" x="581.700" y="559"/><use href="#pin" x="615" y="550"/><use href="#pin" x="621" y="555.300"/>
</svg>
</div>
</div>
</div>

<div class="dock d-flex">
<div class="app run"><svg width="40" height="40"><rect x="1" y="2" width="38" height="36" rx="1" fill="#e5eaf5"/><path d="M2 2H20Q16 12 16.500 21H22Q21.500 30 23 38H2Q1 38 1 37V3Q1 2 2 2z" fill="url(#gF)"/><path d="M9 24Q20 34 32 24M11 11v4M29 11v4" fill="none" stroke="#122038" stroke-width="1.500"/></svg></div>
<div class="app"><svg width="40" height="40"><circle cx="20" cy="20" r="19" fill="url(#gS)" stroke="#f0f0f5" stroke-width="1.500"/><path d="M5 11Q14 1 30 5 36 9 35 16 26 10 20 20 13 12 5 11z" fill="#cf1f7d" opacity=".8"/><path d="M3 22Q13 15 20 20 29 12 37 18 36 28 20 21 9 28 3 22z" fill="#38c5d0" opacity=".6"/><path d="M20 20Q23 28 25 37L21 38Q22 28 20 20z" fill="#f55bb6"/><path d="M20 20L8 33 16 36z" fill="#4fbdf0" opacity=".6"/><ellipse cx="20" cy="20" rx="15" ry="3" fill="url(#gW)" transform="rotate(-25 20 20)"/><ellipse cx="20" cy="20" rx="11" ry="3.500" fill="url(#gW)" transform="rotate(40 20 20)"/><circle cx="20" cy="20" r="5" fill="url(#gW)"/></svg></div>
<div class="app"><svg width="40" height="40"><circle cx="20" cy="20" r="19.500" fill="url(#gG)" stroke="#c9d0d3"/><path d="M32 8Q21 9 15 19L9 21 7 25 14 24 17 28V33L22 29 23 25Q32 19 32 8z" fill="#3b4146"/><circle cx="24.500" cy="15.500" r="2.600" fill="#a6afb3"/><path d="M12 27L8 33 14 31" fill="#3b4146"/></svg></div>
<div class="app"><svg width="40" height="40"><g transform="rotate(-6 20 20)"><rect x="4" y="5" width="34" height="34" fill="#777b80"/><rect x="4" y="2" width="31" height="35" fill="#f8f8f8"/><rect x="4" y="2" width="31" height="10" fill="#ee3c35"/><text x="19.500" y="10" font-size="7.500" fill="#fff" text-anchor="middle">DEC</text><text x="19.500" y="31" font-size="21" font-weight="300" fill="#222" text-anchor="middle">6</text></g></svg></div>
<div class="app"><svg width="40" height="40"><g transform="rotate(-5 20 20)"><rect x="5" y="1" width="31" height="38" fill="#fff"/><rect x="5" y="1" width="31" height="7.500" fill="#fdc809"/><path d="M5 11H36M5 14H36M5 17H36M5 20H36M5 23H36M5 26H36M5 29H36M5 32H36M5 35H36" stroke="#cfcfcf" stroke-width=".8"/><path d="M5 39H36" stroke="#d7aa0a"/></g></svg></div>
<div class="app"><svg width="40" height="40"><circle cx="20" cy="20" r="20" fill="#f1f1ef"/><g opacity=".88"><rect x="15.500" y="3" width="9.500" height="17.500" rx="4.700" fill="#f89a1e"/><rect x="15.500" y="3" width="9.500" height="17.500" rx="4.700" fill="#e8d321" transform="rotate(45 20 20)"/><rect x="15.500" y="3" width="9.500" height="17.500" rx="4.700" fill="#a7d13c" transform="rotate(90 20 20)"/><rect x="15.500" y="3" width="9.500" height="17.500" rx="4.700" fill="#4fb98a" transform="rotate(135 20 20)"/><rect x="15.500" y="3" width="9.500" height="17.500" rx="4.700" fill="#6aa7e0" transform="rotate(180 20 20)"/><rect x="15.500" y="3" width="9.500" height="17.500" rx="4.700" fill="#8c7fc8" transform="rotate(225 20 20)"/><rect x="15.500" y="3" width="9.500" height="17.500" rx="4.700" fill="#c76aa5" transform="rotate(270 20 20)"/><rect x="15.500" y="3" width="9.500" height="17.500" rx="4.700" fill="#e9402b" transform="rotate(315 20 20)"/></g></svg></div>
<div class="app"><svg width="40" height="40"><rect x="1" y="3" width="36" height="31" rx="4" fill="url(#gGr)"/><rect x="6" y="11" width="17" height="15" rx="4" fill="#f0f6ef"/><path d="M24 17l7-6v14l-7-6z" fill="#e9f7e9"/><circle cx="31" cy="27" r="10" fill="#fafafa"/><path d="M27 22q-1 6 7 10l2-2-3-2-1.500 1q-2-1-2.500-3l1-1-1-3z" fill="#16c933" stroke="#16c933" stroke-width="1"/><circle cx="36" cy="6" r="8.500" fill="#e30613"/><text x="36" y="9.500" font-size="10" fill="#fff" text-anchor="middle">6</text></svg></div>
<div class="app"><svg width="40" height="40"><circle cx="20" cy="20" r="20" fill="#0ee05f"/><g fill="none" stroke="#10251a" stroke-linecap="round"><path d="M8 13.500Q21 9 33 16" stroke-width="4"/><path d="M9.500 20.500Q21 17 30.500 23" stroke-width="3.300"/><path d="M10.500 27Q20 24.500 28 29.500" stroke-width="2.700"/></g></svg></div>
<div class="app"><svg width="40" height="40"><circle cx="20" cy="20" r="20" fill="#ececf4"/><g fill="url(#gN)"><path d="M14 10L29 6.500V12L16.500 15V28H14z"/><ellipse cx="12.500" cy="28" rx="4" ry="3.300"/></g><path d="M26.500 8h2.500v17h-2.500z" fill="#ef5a93"/><ellipse cx="25.500" cy="25.500" rx="4" ry="3.300" fill="#42aaf7"/></svg></div>
<div class="app"><svg width="40" height="40"><circle cx="20" cy="20" r="20" fill="url(#gP)"/><g fill="none" stroke="#fff" stroke-width="2"><path d="M14 31A12.500 12.500 0 1 1 26 31"/><path d="M15 26A8 8 0 1 1 25 26"/></g><circle cx="20" cy="18.500" r="3.300" fill="#fff"/><path d="M17 25q0-2 3-2t3 2l-1 9q-.5 1.500-2 1.500t-2-1.500z" fill="#fff"/></svg></div>
<div class="app"><svg width="40" height="40"><circle cx="20" cy="20" r="19.500" fill="#0d0d0f" stroke="#2a2c31"/><svg x="7" y="13" width="11" height="13" color="#fff"><use href="#apple"/></svg><text x="18" y="25" font-size="16" font-weight="500" fill="#fff">tv</text></svg></div>
<div class="app run"><svg width="42" height="42" style="margin-top:-1px"><use href="#chromeic"/></svg></div>
<div class="app run"><svg width="40" height="40"><circle cx="20" cy="20" r="20" fill="#e6eaf0"/><circle cx="20" cy="20" r="18" fill="url(#gB)"/><circle cx="20" cy="20" r="15.800" fill="none" stroke="#c7e6ff" stroke-width="2" stroke-dasharray=".6 2"/><path d="M33 8L22.500 22.500 17.500 17.500z" fill="#f23c36"/><path d="M7 32L17.500 17.500 22.500 22.500z" fill="#f1f1f1"/></svg></div>
<div class="app"><svg width="40" height="40"><circle cx="20" cy="20" r="20" fill="url(#gB)"/><path d="M17.500 9L29 29M22.500 9L12.500 26M11 29l-1 1.500M8 24.500H21M27 24.500h6" stroke="#fff" stroke-width="3.200" stroke-linecap="round"/><circle cx="36" cy="6" r="8.500" fill="#e30613"/><text x="36" y="9.500" font-size="10" fill="#fff" text-anchor="middle">5</text></svg></div>
<div class="app"><svg width="40" height="40"><rect y="1.500" width="40" height="37" rx="2" fill="#a9b2ba"/><circle cx="20" cy="20" r="15.500" fill="#2f3134"/><g fill="none" stroke="#a6a9ac"><circle cx="20" cy="20" r="12.300" stroke-width="2"/><circle cx="20" cy="20" r="14" stroke-width="2" stroke-dasharray="1.600 1.600"/><path d="M20 20H31M20 20L14 10.500M20 20L14 29.500" stroke-width="3.200"/><circle cx="20" cy="20" r="3.500" stroke-width="2"/></g></svg></div>
<div class="app"><svg width="40" height="40"><rect x=".5" y="3" width="39" height="34" rx="1.500" fill="#10161a" stroke="#a4a7aa" stroke-width="1.200"/><path d="M5 9H36M5 15H36M5 21H36M5 27H36M8 5V34M14 5V34M20 5V34M26 5V34M32 5V34" stroke="#24473f" stroke-width=".7"/><path d="M5 23H14l2-1 1.500 3L18 8l1.500 19 2-4h3l3-3 3 5 2-3h4" fill="none" stroke="#69e0c6" stroke-width=".8"/></svg></div>
<div class="app"><svg width="40" height="40"><rect y=".5" width="40" height="39" rx="2" fill="#4b4b4c"/><path d="M9 12L32 5V14L19 18.500 32 22.500V28L9 35V26L22 22 9 18z" fill="#ff9a05"/><path d="M9 17L32 22.500V25L9 19z" fill="#d97900"/></svg></div>
<div class="app"><svg width="42" height="40"><g transform="rotate(-6 20 20)"><rect x="1" y="4" width="33" height="34" fill="#f2eee3"/><path d="M13 4H24L34 16V27Q20 26 13 4z" fill="#7ed16f"/><path d="M16 4Q20 20 34 22" stroke="#fff" stroke-width="3" fill="none"/><path d="M1 21L15 17 34 33V38H27L15 25 1 30z" fill="#fac93c"/><rect x="2" y="27" width="7" height="10" fill="#f4a8b4"/><path d="M9 4v20" stroke="#2a7fea" stroke-width="4"/><circle cx="10" cy="24" r="5" fill="#1e73e6"/><path d="M10 20l3 7-3-1.500-3 1.500z" fill="#fff"/></g><circle cx="32" cy="27" r="9.500" fill="#f3f4f6" stroke="#b9bec4"/><circle cx="32" cy="27" r="5.800" fill="none" stroke="#697d90" stroke-width=".6"/><text x="32" y="29.500" font-size="6.500" fill="#456" text-anchor="middle">3D</text><circle cx="32" cy="20" r="1" fill="#e33"/></svg></div>
<div class="app"><svg width="40" height="40"><path d="M20 0A20 20 0 1 1 10 37.500L0 40 3 30A20 20 0 0 1 20 0z" fill="#f4f7f4"/><path d="M20 3.500A16.500 16.500 0 1 1 11 34L5 35.500 6.500 30A16.500 16.500 0 0 1 20 3.500z" fill="#17ce49"/><path d="M12 11q-4 5 3 12 7 8 13 5 2-2 1.500-4l-5-2.500-2.500 2.500q-4-1.500-6-6l2-2.500-2-5z" fill="#fff"/></svg></div>
<div class="app"><svg width="42" height="42" style="margin-top:-1px"><path d="M3 18Q-2 8 5 2 11-2 19 2 32 1 37 11 40 17 39 24 44 33 37 39 30 43 23 39 12 40 6 32 2 25 3 18z" fill="#0a9cf0"/><path d="M28 13Q24 9 19 10 13 11 13.500 16 14 20 21 21 28 22 28.500 26 28 31.500 21 31.500 15 31.500 12.500 27" fill="none" stroke="#fff" stroke-width="4.600" stroke-linecap="round"/></svg></div>
<div class="app"><svg width="42" height="40"><rect x="5" y="2" width="34" height="28" fill="#b6915b" stroke="#eae2d0"/><g transform="rotate(-6 18 22)"><rect x="1" y="6" width="33" height="31" fill="#fff"/><rect x="3" y="8" width="29" height="27" fill="#8fb4e8"/><path d="M3 11H32V18H3z" fill="#bcd2f1"/><path d="M3 18H32V24H3z" fill="#3a5ca0"/><path d="M3 24H32V35H3z" fill="#2b6480"/><path d="M3 25Q12 22 17 27T28 30L13 35H3z" fill="#dce7ec"/></g><circle cx="32" cy="29" r="8.500" fill="#6d6359" stroke="#c7c8c8" stroke-width="1.500"/><ellipse cx="32" cy="26" rx="6" ry="5" fill="#3b332c"/><path d="M26 33q6 4 12 0v3q-6 3-12 0z" fill="#9a8b78"/></svg></div>
<div class="sep"><i></i></div>
<div class="app"><svg width="40" height="46" style="margin-top:-4px"><path d="M2 1H23L38 15V46H3Q1 46 1 44V3z" fill="#444548"/><path d="M4 3H21L35 17V44H4z" fill="url(#gL)"/><path d="M27 1H38V12z" fill="#58595b"/></svg></div>
<div class="app"><svg width="40" height="42" style="margin-top:-1px"><g transform="rotate(-7 20 21)"><rect x="4" y="3" width="31" height="37" fill="#f6f6f4"/><rect x="4" y="3" width="31" height="7.500" fill="#fb9d1b"/><text x="7" y="9" font-size="5" font-weight="600" fill="#fff">PAGES</text><rect x="7" y="13" width="14" height="11" fill="#249be6"/><path d="M10 15l4-1 4 1-4 7z" fill="#ec7d23"/><path d="M23 14h9M23 17h9M23 20h9M7 28H31M7 31H31M7 34H31M7 37H31" stroke="#c2c2c2"/></g><path d="M36 2L28 28 24 40 23 38 25 27 33 1z" fill="#ec942d"/><path d="M28 28L24 40 23 38 24.500 27z" fill="#383838"/></svg></div>
<div class="app"><svg width="40" height="42" style="margin-top:-1px"><g transform="rotate(-7 20 21)"><rect x="5" y="2" width="30" height="38" fill="#fff" stroke="#fff" stroke-width="2.500" stroke-dasharray="2 1.500"/><rect x="7.500" y="4.500" width="25" height="33" fill="#438fd8"/><path d="M13 8L17 10 22 19 25 22 32 26 29 30 24 27 20 28 14 30 9 26 18 22Q12 16 13 8z" fill="#55402b"/><path d="M15 14l6 8 3 2-7-2z" fill="#b3987a"/><path d="M17 27l4 1-3 3z" fill="#e7c58c"/></g></svg></div>
<div class="sep"><i></i></div>
<div class="app"><svg width="44" height="40"><rect x="1" y="8" width="42" height="24" fill="#323338" stroke="#28292d"/><svg x="28" y="25" width="16" height="16"><use href="#chromeic"/></svg></svg></div>
<div class="app"><svg width="40" height="42"><path d="M4 4H36L31.500 36Q31 40 20 40.500 9 40 8.500 36z" fill="#60666e"/><path d="M8 6L12 38M14 6l2 33M26 6l-1 33M32 6l-4 32" stroke="#7a8189" stroke-width="2" opacity=".3"/><ellipse cx="20" cy="4" rx="16" ry="3.500" fill="#343b45" stroke="#858b92"/></svg></div>
</div>
<script>
// Tracks each label so that it fills the width given in data-w.
document.querySelectorAll('[data-w]').forEach(function (el) {
  var n = el.textContent.length, w = +el.dataset.w;
  el.style.letterSpacing = ((w - el.getBoundingClientRect().width) / n) + 'px';
});
</script>
</body>
</html>
